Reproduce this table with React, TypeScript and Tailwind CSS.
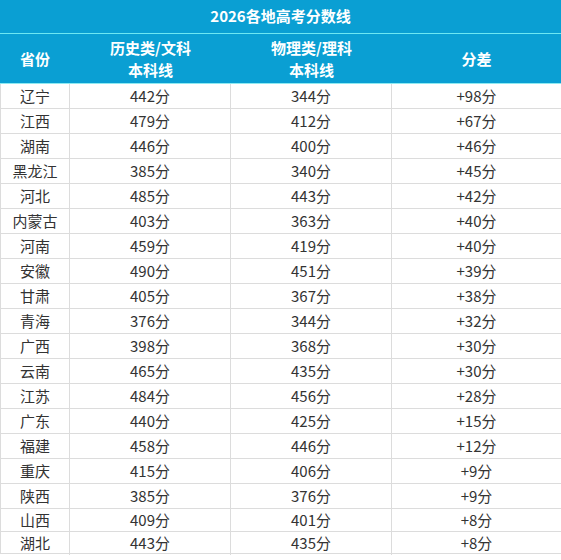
import React from 'react';

const rows: [string, string, string, string][] = [
  ['辽宁', '442分', '344分', '+98分'],
  ['江西', '479分', '412分', '+67分'],
  ['湖南', '446分', '400分', '+46分'],
  ['黑龙江', '385分', '340分', '+45分'],
  ['河北', '485分', '443分', '+42分'],
  ['内蒙古', '403分', '363分', '+40分'],
  ['河南', '459分', '419分', '+40分'],
  ['安徽', '490分', '451分', '+39分'],
  ['甘肃', '405分', '367分', '+38分'],
  ['青海', '376分', '344分', '+32分'],
  ['广西', '398分', '368分', '+30分'],
  ['云南', '465分', '435分', '+30分'],
  ['江苏', '484分', '456分', '+28分'],
  ['广东', '440分', '425分', '+15分'],
  ['福建', '458分', '446分', '+12分'],
  ['重庆', '415分', '406分', '+9分'],
  ['陕西', '385分', '376分', '+9分'],
  ['山西', '409分', '401分', '+8分'],
  ['湖北', '443分', '435分', '+8分'],
];

const font = { fontFamily: '"Noto Sans CJK SC", "Microsoft YaHei", sans-serif' };

const App: React.FC = () => {
  return (
    <div className="w-[561px] h-[560px] bg-white overflow-hidden" style={font}>
      {/* 标题 */}
      <div className="h-[33px] bg-[#0a9fd3] border-b border-[#6ee8f2] text-white font-bold text-[15px] flex items-center justify-center box-content">
        2026各地高考分数线
      </div>

      {/* 表头 */}
      <div className="grid grid-cols-[70px_161px_161px_1fr] h-[49px] bg-[#0a9fd3] border-b border-[#8eeaf2] text-white font-bold text-[15px] leading-[22px] box-content">
        <div className="flex items-center justify-center">省份</div>
        <div className="flex flex-col items-center justify-center">
          <span>历史类/文科</span>
          <span>本科线</span>
        </div>
        <div className="flex flex-col items-center justify-center">
          <span>物理类/理科</span>
          <span>本科线</span>
        </div>
        <div className="flex items-center justify-center">分差</div>
      </div>

      {/* 数据 */}
      <div className="border-l border-[#dcdcdc]">
        {rows.map((r, i) => (
          <div
            key={r[0]}
            className={`grid grid-cols-[69px_161px_161px_1fr] text-[15px] text-[#333] border-b border-[#dcdcdc] ${
              i === 17 ? 'h-[23px]' : i === 18 ? 'h-[22px]' : 'h-[25px]'
            }`}
          >
            {r.map((c, j) => (
              <div
                key={j}
                className={`flex items-center justify-center ${j < 3 ? 'border-r border-[#dcdcdc]' : ''}`}
              >
                {c}
              </div>
            ))}
          </div>
        ))}
      </div>
    </div>
  );
};

export default App;
